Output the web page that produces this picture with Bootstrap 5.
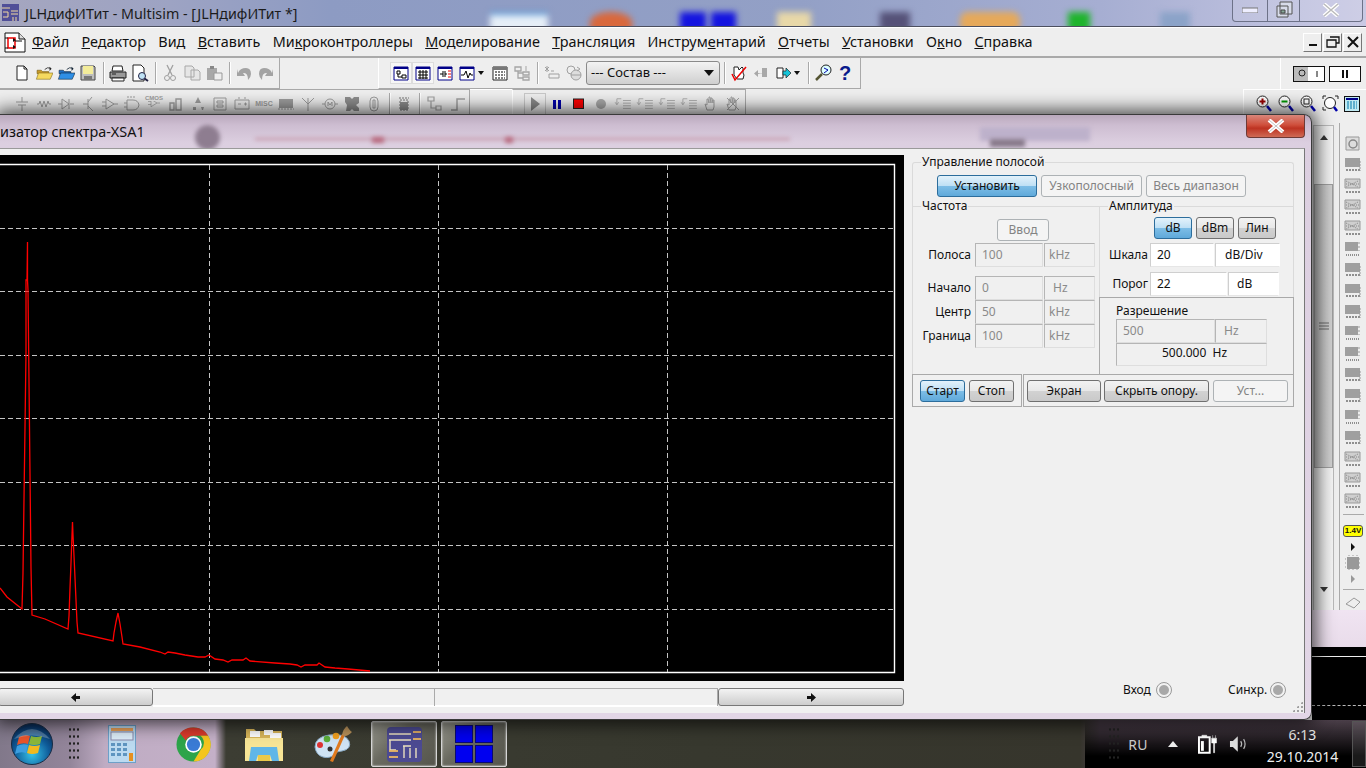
<!DOCTYPE html>
<html lang="ru">
<head>
<meta charset="utf-8">
<title>Multisim</title>
<link href="https://cdn.jsdelivr.net/npm/bootstrap@5.3.0/dist/css/bootstrap.min.css" rel="stylesheet">
<style>
html,body{margin:0;width:1366px;height:768px;overflow:hidden;background:#eee;font-family:"Noto Sans",sans-serif;color:#111}
.app{width:1366px;height:768px;position:relative;overflow:hidden}
.titlebar{height:27px;flex:none;background:linear-gradient(90deg,#a5a6bf 0,#9da3c3 170px,#8d9bc3 330px,#93a0c6 800px,#a6aed2 1100px,#c9c9e4 1366px);border-bottom:1px solid #4c4f5e;position:relative;overflow:hidden;font-size:14.3px;padding-left:25px;line-height:27px;color:#1b1b1b}
.blur{position:absolute;filter:blur(3px);top:12px;height:20px}
.capbtns{position:absolute;right:3px;top:-1px;width:131px;height:23px;border:1px solid #6d7288;border-top:0;border-radius:0 0 4px 4px;display:flex;background:rgba(255,255,255,.1)}
.capbtns>div{display:flex;align-items:center;justify-content:center;border-right:1px solid #6d7288}
.capbtns>div:last-child{border:0}
.menubar{height:31px;flex:none;background:#eee;border-bottom:2px solid #a9a9a9;border-top:1px solid #fff;font-size:14.4px;align-items:center;position:relative}
.menubar span.mi{margin-right:12.300px;line-height:1}
.mdibtn{width:19px;height:19px;background:#eee;border:1px solid;border-color:#fff #777 #777 #fff;display:flex;align-items:center;justify-content:center;margin-right:1px}
.tbrow{background:#eee;position:relative;flex:none}
.r1{height:31px}.r2{height:25px}
.r2 .band{padding-top:3px}
.band{height:100%;display:flex;align-items:center;flex:none}
.band.b{border-right:1px solid #a9a9a9;border-bottom:1px solid #a9a9a9}
.ti{width:22px;height:22px;flex:none;display:flex;align-items:center;justify-content:center}
.ti svg{display:block}
.sep{width:8px;height:22px;flex:none;position:relative}
.sep::after{content:"";position:absolute;left:4px;top:0;bottom:0;width:1px;background:#a9a9a9;box-shadow:1px 0 #fff}
.dd{width:8px;height:22px;flex:none;display:flex;align-items:center}
.dd::after{content:"";border:3px solid transparent;border-top:4px solid #111;border-bottom:0}
.combo{width:134px;height:24px;flex:none;border:1px solid #8a8a8a;border-radius:3px;background:linear-gradient(#f3f3f3,#cfcfcf);font-size:13px;padding-left:4px;display:flex;align-items:center;justify-content:space-between;padding-right:5px}
.combo::after{content:"";border:5px solid transparent;border-top:6px solid #111;border-bottom:0;border-left-width:5px;border-right-width:5px}
.work{height:606px;flex:none;display:flex;background:#eee;position:relative}
.sb{position:absolute;left:1313px;top:11px;width:21px;height:486px;background:linear-gradient(90deg,#e3e3e3,#f3f3f3);border:1px solid #b8b8b8;border-bottom:0;display:flex;flex-direction:column;align-items:center}
.thumb{width:100%;height:284px;background:linear-gradient(90deg,#b9b9b9,#cfcfcf);border:1px solid #9c9c9c;display:flex;align-items:center;justify-content:center}
.vt{position:absolute;left:1339px;top:9px;width:27px;height:487px;border-left:1px solid #a9a9a9;background:#eee;display:flex;flex-direction:column;align-items:center;gap:0;padding-top:10px}
.vt .v{height:21px;flex:none;display:flex;align-items:center}
.bgpink{position:absolute;left:1312px;top:496px;width:54px;height:37px;background:linear-gradient(#f0e4f2,#e9dcea)}
.bgblack{position:absolute;left:1312px;top:533px;width:54px;height:73px;background:#000}
.bgblack i{display:block;position:absolute;left:0;right:0;height:1px}
.taskbar{height:48px;flex:none;position:relative;display:flex;align-items:center;background:linear-gradient(90deg,#81788a 0,#93859a 70px,#bfacc3 105px,#c4b0c8 215px,#3c3d33 226px,#37382e 700px,#36352c 1080px,#4d404c 1100px,#4a3e48 1366px);overflow:hidden;color:#e8e8e8}
.taskbar::before{content:"";position:absolute;left:1085px;right:0;top:0;bottom:0;background:linear-gradient(rgba(0,0,0,0),#000 75%)}
.taskbar>*{position:relative}
.grip{width:11px;height:36px;flex:none;background-image:radial-gradient(circle,#222 1px,transparent 1.3px);background-size:4px 7px}
.tbtn{width:66px;height:46px;flex:none;border:1px solid #d6d6d6;border-radius:2px;background:linear-gradient(135deg,#9a9a90,#6a6a60 40%,#55554c);display:flex;align-items:center;justify-content:center;box-shadow:inset 0 0 2px #fff}
.dlg{position:absolute;left:0;top:114px;width:1312px;height:606px;border:1px solid #3a3a3a;border-left:0;border-radius:0 8px 8px 0;box-shadow:0 0 18px 4px rgba(0,0,0,.7);background:linear-gradient(#b9a8bc 0,#cdbdd1 10px,#dccfe0 28px,#e2d6e6);z-index:5;display:flex;flex-direction:column}
.dlgcap{height:33px;flex:none;font-size:14.4px;padding-top:7px;line-height:20px;position:relative;overflow:hidden;color:#111}
.dlgcap i{position:absolute;filter:blur(2px);display:block}
.closeb{position:absolute;right:6px;top:0;width:59px;height:23px;z-index:6;border:1px solid #6e3a36;border-top:0;border-radius:0 0 4px 4px;background:linear-gradient(#d9867a,#cf4f3c 45%,#bd3322 60%,#cf6a55);display:flex;align-items:center;justify-content:center}
.client{flex:1;margin-right:6px;margin-bottom:6px;background:#f0f0f0;border-top:1px solid #9a9a9a;border-right:1px solid #777;position:relative;display:flex;min-height:0}
.left{width:904px;flex:none;padding-top:6px;display:flex;flex-direction:column}
.scope{display:block;width:904px;height:526px;background:#000;flex:none}
.hsb{height:18px;margin-top:7px;display:flex}
.hb{height:18px;background:linear-gradient(#f3f3f3,#cdcdcd);border:1px solid #777;border-radius:3px;display:flex;align-items:center;justify-content:center}
.htrack{height:18px;border-top:1px solid #aaa;border-right:1px solid #aaa;box-shadow:0 1px #fff,inset 0 -1px #fff}
.panel{width:382px;margin-left:8px;padding-top:13px;flex:none;font-size:12px;line-height:16px;color:#111;position:relative}
.gr{border:1px solid #dadada;position:relative}
.gt{position:relative;top:-9px;left:8px;background:#f0f0f0;padding:0 1px;display:inline-block;height:16px;line-height:16px;white-space:nowrap;font-size:12px}
.btn.xb{--bs-btn-padding-y:0;--bs-btn-padding-x:0;--bs-btn-font-size:12px;--bs-btn-line-height:1;--bs-btn-border-radius:3px;height:22px;border:1px solid #707070;color:#111;background:linear-gradient(#f2f2f2 0,#e8e8e8 48%,#d2d2d2 52%,#c9c9c9);display:flex;align-items:center;justify-content:center;flex:none;opacity:1;white-space:nowrap}
.btn.xb.on{border-color:#2c6d9c;background:linear-gradient(#e3f2fb 0,#bfe0f5 48%,#7dbde6 52%,#5fa9da)}
.btn.xb.off{border-color:#adb2b5;background:#f4f4f4;color:#838383}
.form-control.ff{min-height:0;height:24px;padding:0 0 0 6px;border-radius:0;font-size:12px;line-height:21px;box-shadow:none;flex:none;white-space:nowrap}
.ff.dis{background:#f0f0f0;border:1px solid;border-color:#b5b5b5 #dedede #dedede #b5b5b5;color:#8a8a8a}
.ff.en{background:#fff;border:1px solid;border-color:#cfcfcf #fff #e6e6e6 #cfcfcf;color:#111}
.fr{display:flex;align-items:center}
.lb{text-align:right;flex:none;white-space:nowrap}
.g3{gap:3px}
.radio{width:16px;height:16px;border-radius:50%;border:1px solid #999;background:radial-gradient(circle,#a8a8a8 0,#a8a8a8 45%,#f2f2f2 55%);flex:none}
.grip2{position:absolute;right:1px;bottom:1px;width:11px;height:11px;background-image:radial-gradient(circle,#a0a0a0 1px,transparent 1.2px);background-size:4px 4px;clip-path:polygon(100% 0,100% 100%,0 100%)}
</style>
</head>
<body>
<svg width="0" height="0" class="position-absolute">
<defs>
<symbol id="g-res" viewBox="0 0 16 16"><path d="M1 8h2l1-3 2 6 2-6 2 6 2-6 1 3h2" fill="none" stroke="#9d9d9d"/></symbol>
<symbol id="g-src" viewBox="0 0 16 16"><path d="M8 1v5M2 6h12M4 9h8M8 9v6" fill="none" stroke="#9d9d9d"/></symbol>
<symbol id="g-dio" viewBox="0 0 16 16"><path d="M0 8h4M12 8h4M4 3v10l7-5zM11 3v10" fill="none" stroke="#9d9d9d"/></symbol>
<symbol id="g-tr" viewBox="0 0 16 16"><path d="M3 8h5M8 3v10M12 1 8 6M8 10l5 5" fill="none" stroke="#9d9d9d"/></symbol>
<symbol id="g-op" viewBox="0 0 16 16"><path d="M4 3v10l8-5zM0 6h4M0 10h4M12 8h4" fill="none" stroke="#9d9d9d"/></symbol>
<symbol id="g-ttl" viewBox="0 0 16 16"><path d="M3 4h6q5 0 6 5-1 5-6 5H3zM0 7h3M0 11h3" fill="none" stroke="#9d9d9d"/><path d="M3 1h8" stroke="#9d9d9d" stroke-dasharray="2 1"/></symbol>
<symbol id="g-mix" viewBox="0 0 16 16"><path d="M2 7h4v7H2zM8 3h5v11H8z" fill="none" stroke="#9d9d9d" stroke-width="1.4"/></symbol>
<symbol id="g-ind" viewBox="0 0 16 16"><path d="M8 1 5 7h6zM8 7v4M3 11h3v3H3zM11 11h3l-1 3h-1z" fill="#9d9d9d"/></symbol>
<symbol id="g-ram" viewBox="0 0 16 16"><path d="M2 2h12v12H2z" fill="none" stroke="#9d9d9d"/><path d="M5 5h6v2H5zM5 9h6v2H5z" fill="none" stroke="#9d9d9d"/></symbol>
<symbol id="g-pwr" viewBox="0 0 16 16"><path d="M1 4h14v9H1zM4 2h2M10 2h2M4 8h3M10 8h3M11.5 6.500v3" fill="none" stroke="#9d9d9d"/></symbol>
<symbol id="g-blk" viewBox="0 0 16 16"><path d="M1 3h14v9H1z" fill="#9d9d9d"/><path d="M0 13h16" stroke="#9d9d9d" stroke-dasharray="2 1"/></symbol>
<symbol id="g-ant" viewBox="0 0 16 16"><path d="M2 2l6 6 6-6M8 2v13" fill="none" stroke="#9d9d9d"/></symbol>
<symbol id="g-mot" viewBox="0 0 16 16"><circle cx="8" cy="8" r="5" fill="none" stroke="#9d9d9d"/><path d="M0 8h3M13 8h3M6 10V6l2 3 2-3v4" fill="none" stroke="#9d9d9d"/></symbol>
<symbol id="g-x" viewBox="0 0 16 16"><path d="M1 1h5l2 2 2-2h5v6l-3 2 3 3v3H10l-2-2-2 2H2l1-6-2-3z" fill="#8e8e8e"/></symbol>
<symbol id="g-tube" viewBox="0 0 16 16"><path d="M4 5q0-4 4-4t4 4v6q0 4-4 4t-4-4z" fill="none" stroke="#9d9d9d"/><path d="M7 4h2v8H7z" fill="none" stroke="#9d9d9d"/></symbol>
<symbol id="g-pl" viewBox="0 0 16 16"><path d="M3 2h10M4 4h8v10H4z" fill="none" stroke="#777" stroke-dasharray="2 1"/><path d="M4 6h8v8H4z" fill="#8c8c8c"/></symbol>
<symbol id="g-lst" viewBox="0 0 20 16"><path d="M10 4h9M10 7h9M10 10h9M10 13h9" stroke="#aaa" fill="none"/><path d="M8 2H3v6M1 6l2 3 2-3" stroke="#aaa" fill="none"/></symbol>
<symbol id="g-hand" viewBox="0 0 16 16"><path d="M4 14 2 8l2 1V3l1 0 1 4V1h1l1 6V2h1l1 5V4h1v7l-1 3z" fill="none" stroke="#a0a0a0"/></symbol>
<symbol id="v1" viewBox="0 0 18 16"><path d="M1 1h15v9H1z" fill="#9f9f9f"/><path d="M2 13h14" stroke="#8f8f8f" stroke-width="2" stroke-dasharray="2 1"/><path d="M16 4v10" stroke="#999" stroke-dasharray="2 1"/></symbol>
<symbol id="v2" viewBox="0 0 18 16"><path d="M1 1h13v9H1z" fill="#9f9f9f"/><path d="M15 1v9" stroke="#999" stroke-dasharray="2 2"/><path d="M2 14h14" stroke="#8f8f8f" stroke-width="2" stroke-dasharray="1 1"/></symbol>
<symbol id="v3" viewBox="0 0 18 16"><path d="M1 1h15v9H1z" fill="#cfcfcf" stroke="#999"/><path d="M2 3l12 6M14 3 2 9M2 6h13" stroke="#888" stroke-dasharray="1 1"/><path d="M2 14h14" stroke="#8f8f8f" stroke-width="2" stroke-dasharray="2 1"/></symbol>
<symbol id="cfolder" viewBox="0 0 26 26"><path d="M3 9h6l2 2h9v3H3z" fill="#c89a2a" stroke="#6c5511" stroke-width=".8"/><path d="M2 22 5 13h21l-4 9z" fill="#f5d95e" stroke="#7a6416" stroke-width=".8"/><path d="M14 8q4-4 8-2" fill="none" stroke="#222" stroke-width="1.2"/><path d="M24 7l-3-3v6z" fill="#222"/></symbol>
</defs>
</svg>
<div class="app d-flex flex-column">
  <div class="titlebar">
    <svg width="19" height="19" viewBox="0 0 19 19" class="position-absolute" style="left:1px;top:3px"><rect x="1" y="1" width="17" height="17" fill="#504f98"/><path d="M1 5h8M2 9h5v5H2M10 8h7M10 11h7M12 14v4M15 14v4" stroke="#f0d9a0" fill="none"/></svg>
    <span>JLНдифИТит - Multisim - [JLНдифИТит *]</span>
    <i class="blur" style="left:490px;width:58px;background:#e6eef7;border-top:3px solid #5b9bd8"></i>
    <i class="blur" style="left:590px;width:42px;background:#d9683c;border-radius:50% 50% 0 0"></i>
    <i class="blur" style="left:680px;width:26px;background:#1414e0"></i><i class="blur" style="left:711px;width:25px;background:#1414e0"></i>
    <i class="blur" style="left:777px;width:34px;background:#e8d8a8"></i>
    <i class="blur" style="left:880px;width:30px;background:#555178"></i>
    <i class="blur" style="left:960px;width:60px;background:#e6a95a;border-radius:8px"></i>
    <i class="blur" style="left:1068px;width:22px;background:#1eb42c"></i>
    <i class="blur" style="left:1160px;width:30px;background:#8ba3c8"></i>
    <div class="capbtns">
      <div style="width:35px"><svg width="16" height="6"><rect width="16" height="5" y="1" fill="#eef" stroke="#777"/></svg></div>
      <div style="width:32px"><svg width="18" height="18"><path d="M5 1h12v12H5z M2 5h11v11H2z" fill="#d8dcea" stroke="#555" /><path d="M6 9h4v3H6z" fill="#8a9" stroke="#444"/></svg></div>
      <div class="flex-fill"><svg width="18" height="14"><path d="M2 1 16 13M16 1 2 13" stroke="#fff" stroke-width="4"/><path d="M2 1 16 13M16 1 2 13" stroke="#777" stroke-width="1.500" opacity=".5"/></svg></div>
    </div>
  </div>
  <div class="menubar d-flex">
    <svg width="22" height="24" viewBox="0 0 22 24" class="ms-1 me-1 flex-none"><path d="M1 3h14l6 6v13H1z" fill="#fff" stroke="#111"/><path d="M15 3v6h6" fill="#ddd" stroke="#111"/><path d="M4 8h7v10H4z" fill="none" stroke="#e00" stroke-width="1.500"/><path d="M1 8h3M1 18h3M11 11h7" stroke="#111"/><path d="M9 8v4l3-2zM9 15v4l3-2z" fill="#111"/></svg>
    <div class="d-flex" style="margin-left:2px">
      <span class="mi"><u>Ф</u>айл</span><span class="mi"><u>Р</u>едактор</span><span class="mi">Вид</span><span class="mi"><u>В</u>ставить</span><span class="mi">Ми<u>к</u>роконтроллеры</span><span class="mi"><u>М</u>оделирование</span><span class="mi"><u>Т</u>рансляция</span><span class="mi">Инструм<u>е</u>нтарий</span><span class="mi"><u>О</u>тчеты</span><span class="mi"><u>У</u>становки</span><span class="mi">О<u>к</u>но</span><span class="mi"><u>С</u>правка</span>
    </div>
    <div class="ms-auto d-flex" style="margin-right:3px">
      <div class="mdibtn"><svg width="10" height="10"><path d="M1 8h8" stroke="#111" stroke-width="2"/></svg></div>
      <div class="mdibtn"><svg width="14" height="12"><path d="M4 1h9v6h-3M1 4h9v7H1z M1 4h9" fill="none" stroke="#111" stroke-width="1.300"/></svg></div>
      <div class="mdibtn"><svg width="12" height="12"><path d="M1 1l10 10M11 1 1 11" stroke="#111" stroke-width="2"/></svg></div>
    </div>
  </div>
  <div class="tbrow r1 d-flex">
    <div class="band b" style="width:280px;padding-left:11px">
      <div class="ti"><svg width="16" height="16"><path d="M3 1h7l3 3v11H3z" fill="#fff" stroke="#222"/><path d="M10 1v3h3" fill="none" stroke="#222"/></svg></div>
      <div class="ti"><svg width="18" height="18"><use href="#cfolder"/></svg></div>
      <div class="ti"><svg width="18" height="18" viewBox="0 0 26 26"><path d="M3 9h6l2 2h9v3H3z" fill="#1f6fc4" stroke="#123" stroke-width=".8"/><path d="M2 22 5 13h21l-4 9z" fill="#2f8fe6" stroke="#123" stroke-width=".8"/><path d="M14 8q4-4 8-2" fill="none" stroke="#123" stroke-width="1.200"/><path d="M24 7l-3-3v6z" fill="#123"/></svg></div>
      <div class="ti"><svg width="16" height="16"><path d="M1 1h13l1 1v13H1z" fill="#bdbdbd" stroke="#444"/><path d="M3 1h10v8H3z" fill="#f3ec9a"/><path d="M4 11h8v4H4z" fill="#777"/></svg></div>
      <div class="sep"></div>
      <div class="ti"><svg width="18" height="17"><path d="M4 1h9l1 5H3z" fill="#fff" stroke="#222"/><path d="M1 7h16v6H1z" fill="#999" stroke="#222"/><path d="M3 13h12v3H3z" fill="#fff" stroke="#222"/><path d="M3 9h4" stroke="#222"/></svg></div>
      <div class="ti"><svg width="18" height="18"><path d="M2 1h8l3 3v13H2z" fill="#fff" stroke="#222"/><circle cx="11" cy="12" r="3.500" fill="#bfe2f5" stroke="#224"/><path d="M13.500 14.500 17 17" stroke="#224" stroke-width="2"/></svg></div>
      <div class="sep"></div>
      <div class="ti"><svg width="16" height="18"><path d="M5 1l5 10M11 1 6 11" stroke="#a0a0a0" stroke-width="1.300"/><circle cx="5" cy="14" r="2.500" fill="none" stroke="#a0a0a0"/><circle cx="11" cy="14" r="2.500" fill="none" stroke="#a0a0a0"/></svg></div>
      <div class="ti"><svg width="17" height="16"><path d="M1 1h7l2 2v9H1zM7 5h7l2 2v8H7z" fill="#e6e6e6" stroke="#a8a8a8"/></svg></div>
      <div class="ti"><svg width="17" height="16"><path d="M1 3h10v12H1z" fill="#a8a8a8"/><path d="M4 1h4v3H4z" fill="#888"/><path d="M8 8h8v7H8z" fill="#eee" stroke="#999"/></svg></div>
      <div class="sep"></div>
      <div class="ti"><svg width="18" height="16"><path d="M3 8q2-5 8-5 5 0 5 6 0 3-3 6-0-8-5-7l2 3-8 0 0-7z" fill="#a3a3a3"/></svg></div>
      <div class="ti"><svg width="18" height="16"><path d="M15 8q-2-5-8-5-5 0-5 6 0 3 3 6 0-8 5-7l-2 3 8 0 0-7z" fill="#a3a3a3"/></svg></div>
    </div>
    <div class="band" style="width:98px"></div>
    <div class="band b" style="width:483px;padding-left:11px;border-left:1px solid #fff">
      <div class="ti" style="background:#f6f6f6;outline:1px solid #dcdcdc;outline-offset:-1px"><svg width="16" height="15"><path d="M1 1h14v13H1z" fill="#fff" stroke="#008"/><path d="M1 1h14v2H1z" fill="#008"/><path d="M4 5h3v3H4zM9 9h4v3H9zM5 8v3h4" fill="none" stroke="#000"/></svg></div>
      <div class="ti" style="background:#f6f6f6;outline:1px solid #dcdcdc;outline-offset:-1px"><svg width="16" height="15"><path d="M1 1h14v13H1z" fill="#fff" stroke="#008"/><path d="M1 1h14v2H1z" fill="#008"/><path d="M3 6h10M3 9h10M3 12h10M5 4v9M8 4v9M11 4v9" stroke="#000" fill="none"/></svg></div>
      <div class="ti"><svg width="16" height="15"><path d="M1 1h14v13H1z" fill="#fff" stroke="#008"/><path d="M1 1h14v2H1z" fill="#008"/><path d="M3 8h3M6 5v6M8 5v6M8 8h2" stroke="#000"/><path d="M11 5h3M11 8h3M11 11h3" stroke="#e00"/></svg></div>
      <div class="ti"><svg width="16" height="15"><path d="M1 1h14v13H1z" fill="#fff" stroke="#008"/><path d="M1 1h14v2H1z" fill="#008"/><path d="M2 9h3l2-4 2 7 2-5 1 2h2" fill="none" stroke="#000"/></svg></div>
      <div class="dd"></div>
      <div class="ti" style="margin-left:3px"><svg width="16" height="15"><path d="M1 1h14v13H1z" fill="#fff" stroke="#222"/><path d="M1 1h14v3H1z" fill="#777"/><path d="M3 6h10M3 9h10M3 12h10" stroke="#000" stroke-dasharray="2 1"/></svg></div>
      <div class="ti"><svg width="16" height="16"><path d="M1 2h6v4H1zM9 7h6v3H9zM9 12h6v3H9zM4 6v7h5M4 8h5" fill="none" stroke="#a5a5a5" stroke-width="1.300"/><path d="M12 1v5" stroke="#a5a5a5"/></svg></div>
      <div class="sep"></div>
      <div class="ti"><svg width="16" height="16"><path d="M1 2 5 6M5 2 1 6M3 1v6M5 9h10v4H5zM7 6h3" stroke="#a0a0a0" fill="none"/></svg></div>
      <div class="ti"><svg width="16" height="16"><circle cx="5" cy="5" r="4" fill="none" stroke="#a0a0a0"/><circle cx="10" cy="10" r="5" fill="#ddd" stroke="#a0a0a0"/><path d="M5 10h10M11 2l3 2-3 2" stroke="#a0a0a0" fill="none"/></svg></div>
      <div class="combo" style="margin-left:1px"><span>--- Состав ---</span></div>
      <div class="sep"></div>
      <div class="ti"><svg width="17" height="17"><path d="M3 2h4l1 3 3-3 1 1v5l1 2-1 4H6L3 10z" fill="#fff" stroke="#222"/><path d="M1 9l3 6L15 2" fill="none" stroke="#e00" stroke-width="1.500"/></svg></div>
      <div class="ti"><svg width="16" height="14"><path d="M9 2h5v9H9zM9 7H5V4L1 7.500 5 11V8" fill="#a8a8a8"/></svg></div>
      <div class="ti"><svg width="17" height="14"><path d="M2 2h6v10H2z" fill="#fff" stroke="#222"/><path d="M8 5h3V2l5 5-5 5V9H8z" fill="#16c4d8" stroke="#222" stroke-width=".7"/></svg></div>
      <div class="dd"></div>
      <div class="sep" style="margin-left:2px"></div>
      <div class="ti"><svg width="17" height="18"><circle cx="11" cy="6" r="5" fill="#dff" stroke="#222"/><path d="M7 10 1 16" stroke="#553" stroke-width="2.500"/><path d="M9 4l4 2-4 3" fill="none" stroke="#00a"/></svg></div>
      <div class="ti"><span class="fw-bold" style="font:bold 20px 'Liberation Sans',sans-serif;color:#0a1a8c;line-height:1">?</span></div>
    </div>
    <div class="band flex-fill"></div>
    <div class="band" style="width:86px;border-left:1px solid #fff;gap:4px;padding-left:12px">
      <svg width="32" height="16"><rect x=".5" y=".5" width="31" height="15" fill="#fff" stroke="#111"/><path d="M1 1h14v14H1z" fill="#bbb"/><circle cx="9" cy="7" r="3" fill="none" stroke="#222" /><path d="M24 5v6" stroke="#111"/></svg>
      <svg width="32" height="16"><rect x=".5" y=".5" width="31" height="15" fill="#fff" stroke="#111"/><path d="M14 4v8M18 4v8" stroke="#111" stroke-width="2"/></svg>
    </div>
  </div>
  <div class="tbrow r2 d-flex">
    <div class="band" style="width:470px;padding-left:11px;border-right:1px solid #a9a9a9;border-top:1px solid #a9a9a9">
      <div class="ti"><svg width="16" height="16"><use href="#g-src"/></svg></div>
      <div class="ti"><svg width="16" height="16"><use href="#g-res"/></svg></div>
      <div class="ti"><svg width="16" height="16"><use href="#g-dio"/></svg></div>
      <div class="ti"><svg width="16" height="16"><use href="#g-tr"/></svg></div>
      <div class="ti"><svg width="16" height="16"><use href="#g-op"/></svg></div>
      <div class="ti"><svg width="16" height="16"><use href="#g-ttl"/></svg></div>
      <div class="ti flex-column" style="line-height:1;position:relative"><span style="font:bold 6px 'Liberation Sans',sans-serif;color:#9d9d9d;letter-spacing:0">CMOS</span><svg width="16" height="12" viewBox="0 4 16 12"><use href="#g-op"/></svg></div>
      <div class="ti"><svg width="16" height="16"><use href="#g-mix"/></svg></div>
      <div class="ti"><svg width="16" height="16"><use href="#g-ind"/></svg></div>
      <div class="ti"><svg width="16" height="16"><use href="#g-ram"/></svg></div>
      <div class="ti"><svg width="16" height="16"><use href="#g-pwr"/></svg></div>
      <div class="ti"><span style="font:bold 7px 'Liberation Sans',sans-serif;color:#9d9d9d">MISC</span></div>
      <div class="ti"><svg width="16" height="16"><use href="#g-blk"/></svg></div>
      <div class="ti"><svg width="16" height="16"><use href="#g-ant"/></svg></div>
      <div class="ti"><svg width="16" height="16"><use href="#g-mot"/></svg></div>
      <div class="ti"><svg width="16" height="16"><use href="#g-x"/></svg></div>
      <div class="ti"><svg width="16" height="16"><use href="#g-tube"/></svg></div>
      <div class="sep"></div>
      <div class="ti"><svg width="16" height="16"><use href="#g-pl"/></svg></div>
      <div class="sep"></div>
      <div class="ti"><svg width="16" height="16"><path d="M2 1h6v4H2zM10 10h5v4h-5zM5 5v7h5" fill="none" stroke="#a0a0a0" stroke-width="1.200"/></svg></div>
      <div class="ti" style="margin-left:2px"><svg width="16" height="16"><path d="M1 14h6V3h8" fill="none" stroke="#a0a0a0" stroke-width="1.500"/></svg></div>
    </div>
    <div class="band" style="width:42px;border-top:1px solid #fff"></div>
    <div class="band" style="width:234px;padding-left:11px;border-right:1px solid #a9a9a9;border-top:1px solid #a9a9a9;border-left:1px solid #fff">
      <div class="ti" style="border:1px solid #c8c8c8;border-bottom:0"><svg width="12" height="16"><path d="M2 1l9 7-9 7z" fill="#8a8a8a"/></svg></div>
      <div class="ti"><svg width="12" height="12"><path d="M2 2h3v9H2z" fill="#00a"/><path d="M7 2h3v9H7z" fill="#00a"/></svg></div>
      <div class="ti"><svg width="12" height="12"><rect x=".5" y="1" width="10" height="9.500" fill="#f00" stroke="#222"/></svg></div>
      <div class="ti"><svg width="12" height="12"><circle cx="6" cy="6" r="5" fill="#a8a8a8"/></svg></div>
      <div class="ti"><svg width="18" height="14"><use href="#g-lst"/></svg></div>
      <div class="ti"><svg width="18" height="14"><use href="#g-lst"/></svg></div>
      <div class="ti"><svg width="18" height="14"><use href="#g-lst"/></svg></div>
      <div class="ti"><svg width="18" height="14"><use href="#g-lst"/></svg></div>
      <div class="ti"><svg width="16" height="16"><use href="#g-hand"/></svg></div>
      <div class="ti"><svg width="16" height="16"><use href="#g-hand"/><path d="M2 2l12 12M14 2 2 14" stroke="#a0a0a0"/></svg></div>
    </div>
    <div class="band flex-fill"></div>
    <div class="band" style="width:123px;padding-left:9px;border-left:1px solid #fff;border-top:1px solid #fff">
      <div class="ti"><svg width="16" height="17"><circle cx="6.500" cy="6.500" r="5.500" fill="#fff" stroke="#222"/><path d="M3.500 6.500h6M6.500 3.500v6" stroke="#900" stroke-width="2"/><path d="M11 11l4 5" stroke="#00a" stroke-width="2.500"/></svg></div>
      <div class="ti"><svg width="16" height="17"><circle cx="6.500" cy="6.500" r="5.500" fill="#fff" stroke="#222"/><path d="M3.500 6.500h6" stroke="#090" stroke-width="2"/><path d="M11 11l4 5" stroke="#00a" stroke-width="2.500"/></svg></div>
      <div class="ti"><svg width="16" height="17"><circle cx="6.500" cy="6.500" r="5.500" fill="#fff" stroke="#222"/><rect x="4" y="4" width="5" height="5" fill="none" stroke="#222"/><path d="M11 11l4 5" stroke="#00a" stroke-width="2.500"/></svg></div>
      <div class="ti"><svg width="17" height="17"><circle cx="8" cy="8" r="5.500" fill="#fff" stroke="#222"/><path d="M1 4V1h3M13 1h3v3M1 12v3h3" fill="none" stroke="#222"/><path d="M12 12l3 4" stroke="#00a" stroke-width="2.500"/></svg></div>
      <div class="ti"><svg width="16" height="16"><rect x=".5" y=".5" width="15" height="15" fill="#bfe9f2" stroke="#111"/><path d="M2 2h12v2H2z" fill="#008"/><path d="M3 6h10M3 8h10M3 10h10M3 12h10" stroke="#07a" stroke-dasharray="2 1"/></svg></div>
    </div>
  </div>
  <div class="work">
    <div class="sb">
      <svg width="10" height="7" class="mt-2 flex-none"><path d="M5 1l4 5H1z" fill="#333"/></svg>
      <div class="thumb flex-none" style="margin-top:43px"><svg width="10" height="9"><path d="M0 1h10M0 4h10M0 7h10" stroke="#666"/></svg></div>
      <svg width="10" height="7" class="flex-none" style="margin-top:118px"><path d="M5 6l4-5H1z" fill="#333"/></svg>
    </div>
    <div class="vt">
      <div class="v"><svg width="16" height="16"><path d="M1 1h13v13H1z" fill="#ddd" stroke="#999"/><circle cx="8" cy="8" r="4" fill="none" stroke="#888" stroke-width="1.500"/></svg></div>
      <div class="v"><svg width="18" height="16"><use href="#v1"/></svg></div>
      <div class="v"><svg width="18" height="16"><use href="#v3"/></svg></div>
      <div class="v"><svg width="18" height="16"><use href="#v3"/></svg></div>
      <div class="v"><svg width="18" height="16"><use href="#v3"/></svg></div>
      <div class="v"><svg width="18" height="16"><use href="#v2"/></svg></div>
      <div class="v"><svg width="18" height="16"><use href="#v1"/></svg></div>
      <div class="v"><svg width="18" height="16"><use href="#v1"/></svg></div>
      <div class="v"><svg width="18" height="16"><use href="#v1"/></svg></div>
      <div class="v"><svg width="18" height="16"><use href="#v2"/></svg></div>
      <div class="v"><svg width="18" height="16"><use href="#v2"/></svg></div>
      <div class="v"><svg width="18" height="16"><use href="#v1"/></svg></div>
      <div class="v"><svg width="18" height="16"><use href="#v1"/></svg></div>
      <div class="v"><svg width="18" height="16"><use href="#v2"/></svg></div>
      <div class="v"><svg width="18" height="16"><use href="#v1"/></svg></div>
      <div class="v"><svg width="18" height="16"><use href="#v3"/></svg></div>
      <div class="v"><svg width="18" height="16"><use href="#v3"/></svg></div>
      <div class="v"><svg width="18" height="16"><use href="#v3"/></svg></div>
      <div style="width:21px;height:1px;background:#aaa;margin:3px 0 5px;flex:none"></div>
      <div class="d-flex align-items-center justify-content-center" style="width:20px;height:12px;background:#ff0;border:1px solid #555;border-radius:3px;font:bold 8px/10px 'Liberation Sans',sans-serif;color:#111;margin-top:5px;flex:none">1.4V</div>
      <svg width="6" height="8" class="flex-none" style="margin-top:6px"><path d="M1 0l4 4-4 4z" fill="#111"/></svg>
      <svg width="16" height="16" class="flex-none" style="margin-top:4px"><path d="M2 2h12v12H2z" fill="#999"/><path d="M0 4h16M0 8h16M0 12h16M4 0v16M8 0v16M12 0v16" stroke="#999" stroke-dasharray="1 1"/></svg>
      <svg width="6" height="8" class="flex-none" style="margin-top:4px"><path d="M1 0l4 4-4 4z" fill="#999"/></svg>
      <div style="width:21px;height:1px;background:#aaa;margin-top:6px;flex:none"></div>
      <svg width="16" height="14" class="flex-none" style="margin-top:5px"><path d="M1 9l8-6 6 4-6 6z" fill="none" stroke="#999"/></svg>
    </div>
    <div class="bgpink"></div>
    <div class="bgblack"><i style="top:9px;background:#eee"></i><i style="top:58px;border-top:1px dashed #bbb"></i></div>
  </div>
  <div class="taskbar">
    <div class="flex-none d-flex align-items-center justify-content-center" style="width:66px">
      <svg width="44" height="44" viewBox="0 0 44 44"><defs><radialGradient id="orb" cx=".5" cy=".75" r=".7"><stop offset="0" stop-color="#35c3e8"/><stop offset=".6" stop-color="#0f5c9a"/><stop offset="1" stop-color="#0a2f5c"/></radialGradient></defs><circle cx="22" cy="22" r="20.500" fill="url(#orb)" stroke="#1a2c44"/><path d="M9 15q6-3 11-1l-2 8q-5-2-11 1z" fill="#e8552c"/><path d="M21 14q5 2 11 0l-2 8q-6 2-11 0z" fill="#8bb73a"/><path d="M7 24q6-3 11-1l-2 8q-5-2-11 1z" fill="#3d9ee0"/><path d="M19 23q5 2 11 0l-2 8q-6 2-11 0z" fill="#f2b91f"/><path d="M4 17q18-20 36 0-18-7-36 0z" fill="#fff" opacity=".25"/></svg>
    </div>
    <div class="grip" style="margin-left:4px"></div>
    <div class="flex-none" style="margin-left:29px;width:28px"><svg width="28" height="38" viewBox="0 0 28 38"><rect x=".5" y=".5" width="27" height="37" fill="#bcdaf0" stroke="#6da0c8"/><rect x="3" y="3" width="22" height="3" fill="#e8a058"/><rect x="3" y="7" width="22" height="8" fill="#dcecf8" stroke="#88a"/><g fill="#5f95c0"><rect x="3" y="18" width="4" height="3"/><rect x="9" y="18" width="4" height="3"/><rect x="15" y="18" width="4" height="3"/><rect x="3" y="23" width="4" height="3"/><rect x="9" y="23" width="4" height="3"/><rect x="15" y="23" width="4" height="3"/><rect x="3" y="28" width="4" height="3"/><rect x="9" y="28" width="4" height="3"/><rect x="15" y="28" width="4" height="3"/></g><rect x="21" y="28" width="4" height="8" fill="#e69020"/></svg></div>
    <div class="flex-none" style="margin-left:40px"><svg width="35" height="35" viewBox="0 0 36 36"><circle cx="18" cy="18" r="17.500" fill="#2da44a"/><path d="M18 .5A17.500 17.500 0 0 1 33.200 9H18a9 9 0 0 0-8 5L4 6.500A17.500 17.500 0 0 1 18 .5z" fill="#dc3a2c"/><path d="M33.200 9A17.500 17.500 0 0 1 18 35.500L25.700 23A9 9 0 0 0 25 9z" fill="#f4c51e"/><circle cx="18" cy="18" r="8.500" fill="#fff"/><circle cx="18" cy="18" r="6.800" fill="#3a7bd5"/></svg></div>
    <div class="flex-none" style="margin-left:33px"><svg width="40" height="38" viewBox="0 0 40 38"><path d="M2 4h8l2 2h26v28H2z" fill="#d9b75a"/><path d="M6 6h10v6H6z" fill="#fff"/><path d="M20 5h9v5h-9zM26 8h11v5H26z" fill="#fff"/><path d="M1 13h38v23H1z" fill="#f7e596"/><path d="M5 36 7 22h26l2 14h-7l-2-6H14l-2 6z" fill="#5fb6e8"/><path d="M14 30h12v6H14z" fill="#e9c94a"/></svg></div>
    <div class="flex-none" style="margin-left:30px"><svg width="40" height="38" viewBox="0 0 40 38"><path d="M1 22q0-10 14-12 16-2 20 6 3 8-7 10-5 0-7 3-5 5-12 3T1 22z" fill="#cfe3f4" stroke="#89a9c4"/><circle cx="6" cy="20" r="3" fill="#d33"/><circle cx="13" cy="14" r="3.300" fill="#5aad3a"/><circle cx="22" cy="11" r="3.300" fill="#f0a020"/><circle cx="16" cy="24" r="2.500" fill="#333"/><path d="M16 36 28 9l3 1-12 27z" fill="#e07a1e"/><path d="M28 10q1-6 5-9 3 5 5 6-4 4-7 4z" fill="#b8915a"/></svg></div>
    <div class="tbtn" style="margin-left:17px"><svg width="37" height="37" viewBox="0 0 37 37"><rect x="1" y="1" width="35" height="35" rx="4" fill="#4c4a92"/><path d="M3 8h22M3 14h11M4 14v10h6M14 14h11M3 31h9M3 25h9M18 20v12M24 22v10M30 22v10M17 20h8M27 6h8M27 13h8" fill="none" stroke="#eadfc0" stroke-width="1.400"/><path d="M27 6h8M27 13h8M3 25h9M3 31h9" stroke="#e4a74c" stroke-width="1.600"/></svg></div>
    <div class="tbtn" style="margin-left:4px"><svg width="40" height="40" viewBox="0 0 40 40"><g fill="#0000f0" stroke="#0a0a70"><rect x="1.500" y="1.500" width="17" height="17"/><rect x="21.500" y="1.500" width="17" height="17"/><rect x="1.500" y="21.500" width="17" height="17"/><rect x="21.500" y="21.500" width="17" height="17"/></g></svg></div>
    <div class="grip" style="margin-left:601px"></div>
    <span style="font-size:14px;margin-left:9px;color:#ccc;letter-spacing:.3px">RU</span>
    <svg width="10" height="6" style="margin-left:20px"><path d="M5 0l5 6H0z" fill="#eee"/></svg>
    <svg width="20" height="20" viewBox="0 0 20 20" style="margin-left:20px"><path d="M1 3h11v16H1z" fill="none" stroke="#fff" stroke-width="2"/><path d="M3 7h3v10H3z" fill="#fff"/><path d="M4 1h5v2H4zM14 4h5v5h-5zM16 9h1v10h-1zM15 1v3M18 1v3" fill="#fff" stroke="#fff" stroke-width=".5"/></svg>
    <svg width="20" height="18" viewBox="0 0 20 18" style="margin-left:12px"><path d="M1 6h3l5-5v16l-5-5H1z" fill="#ddd"/><path d="M12 6q2 3 0 6M15 4q3 5 0 10" fill="none" stroke="#bbb" stroke-width="1.200"/></svg>
    <div class="text-center flex-none" style="width:92px;margin-left:9px;padding-top:3px;font-size:14px;line-height:22px;color:#eee"><div>6:13</div><div>29.10.2014</div></div>
    <div class="flex-none" style="width:14px;height:46px;margin-left:5px;border:1px solid #555;background:rgba(255,255,255,.1)"></div>
  </div>

  <div class="dlg">
    <div class="dlgcap">изатор спектра-XSA1
      <i style="left:195px;top:10px;width:25px;height:25px;background:#8e7d90;border-radius:50%"></i>
      <i style="left:255px;top:23px;width:535px;height:2px;background:#c28fa0"></i>
      <i style="left:372px;top:22px;width:12px;height:6px;background:#b86b80"></i>
      <i style="left:505px;top:22px;width:8px;height:6px;background:#b86b80"></i>
      <i style="left:980px;top:12px;width:110px;height:14px;background:#bdb1cb"></i>
      <i style="left:990px;top:24px;width:35px;height:8px;background:#87798a"></i>
    </div>
    <button class="closeb p-0" type="button" aria-label="Закрыть"><svg width="20" height="14"><path d="M3 1l14 12M17 1 3 13" stroke="#fff" stroke-width="4"/><path d="M3 1l14 12M17 1 3 13" stroke="#777" stroke-width="1" opacity=".45"/></svg></button>
    <div class="client">
      <div class="left">
        <svg class="scope" viewBox="0 0 904 526" xmlns="http://www.w3.org/2000/svg">
          <path d="M-1 9.500H894.500V517.500H-1" fill="none" stroke="#fff" stroke-width="1.400"/>
          <g stroke="#c4c4c4" stroke-dasharray="5 3" fill="none">
            <path d="M0 73.500H894M0 136.500H894M0 200.500H894M0 263.500H894M0 327.500H894M0 390.500H894M0 454.500H894"/>
            <path d="M209.500 10V517M438.500 10V517M667.500 10V517"/>
          </g>
          <path transform="translate(0 -155)" d="M0 588 7 597 22 609 23 573 24 499 25 427 26 353 26 280 27 280 27.500 242 27.500 280 28 290 29 382 30 475 31 568 32 615 45 619 68 629 69 616 70 588 71 563 72 535 72.500 522 73 535 74 556 75 578 76 600 77 622 78 633 113 641 114 633 116 622 118 613 120 624 122 637 123 644 140 647 160 652 165 654 168 652 175 653 185 655 198 657 205 657 209 655 215 659 223 660 228 662 232 660 243 660 246 658 250 661 275 663 290 664 297 665 301 667 305 665 317 665 319 663 325 667 335 668 348 669 370 671" fill="none" stroke="#f00" stroke-width="1.300"/>
        </svg>
        <div class="hsb">
          <div class="hb" style="width:155px;margin-left:-2px"><svg width="9" height="9"><path d="M0 4.500 5 0v3h4v3H5v3z" fill="#111"/></svg></div>
          <div class="htrack" style="width:282px"></div>
          <div class="htrack" style="width:283px"></div>
          <div class="hb" style="width:186px"><svg width="9" height="9"><path d="M9 4.500 4 0v3H0v3h4v3z" fill="#111"/></svg></div>
        </div>
      </div>
      <div class="panel">
        <div class="gr" style="height:44px;border-bottom:0;border-radius:3px 3px 0 0">
          <span class="gt">Управление полосой</span>
          <div class="d-flex gap-1" style="margin:-4px 0 0 24px">
            <button class="btn xb on" style="width:100px" type="button">Установить</button>
            <button class="btn xb off" style="width:101px" type="button">Узкополосный</button>
            <button class="btn xb off" style="width:100px" type="button">Весь диапазон</button>
          </div>
        </div>
        <div class="d-flex">
          <div class="gr" style="width:187px;height:168px;border-bottom:0;border-right:0">
            <span class="gt">Частота</span>
            <div class="d-flex" style="margin:-4px 0 0 84px"><button class="btn xb off" style="width:52px" type="button">Ввод</button></div>
            <div class="fr" style="margin-top:2px"><span class="lb" style="width:58px">Полоса</span><div class="form-control ff dis" style="width:68px;margin-left:4px">100</div><div class="form-control ff dis" style="width:51px;margin-left:1px;padding-left:4px">kHz</div></div>
            <div class="fr" style="margin-top:9px"><span class="lb" style="width:58px">Начало</span><div class="form-control ff dis" style="width:68px;margin-left:4px">0</div><div class="form-control ff dis" style="width:51px;margin-left:1px;padding-left:8px">Hz</div></div>
            <div class="fr"><span class="lb" style="width:58px">Центр</span><div class="form-control ff dis" style="width:68px;margin-left:4px">50</div><div class="form-control ff dis" style="width:51px;margin-left:1px;padding-left:4px">kHz</div></div>
            <div class="fr"><span class="lb" style="width:58px">Граница</span><div class="form-control ff dis" style="width:68px;margin-left:4px">100</div><div class="form-control ff dis" style="width:51px;margin-left:1px;padding-left:4px">kHz</div></div>
          </div>
          <div style="width:195px">
            <div class="gr" style="height:91px;border-bottom:0;border-right:1px solid #dadada">
              <span class="gt">Амплитуда</span>
              <div class="d-flex gap-1" style="margin:-6px 0 0 54px">
                <button class="btn xb on" style="width:38px" type="button">dB</button>
                <button class="btn xb" style="width:38px" type="button">dBm</button>
                <button class="btn xb" style="width:38px" type="button">Лин</button>
              </div>
              <div class="fr" style="margin-top:4px"><span class="lb" style="width:48px">Шкала</span><div class="form-control ff en" style="width:64px;margin-left:2px">20</div><div class="form-control ff en" style="width:65px;margin-left:1px;padding-left:9px">dB/Div</div></div>
              <div class="fr" style="margin-top:5px"><span class="lb" style="width:48px">Порог</span><div class="form-control ff en" style="width:77px;margin-left:2px">22</div><div class="form-control ff en" style="width:51px;margin-left:1px;padding-left:8px">dB</div></div>
            </div>
            <div class="gr" style="height:77px;border:1px solid #a9a9a9;border-bottom:0;padding:5px 0 0 16px">
              <div>Разрешение</div>
              <div class="fr"><div class="form-control ff dis" style="width:99px">500</div><div class="form-control ff dis" style="width:52px;padding-left:8px">Hz</div></div>
              <div class="form-control ff dis text-center" style="width:151px;color:#111;height:23px;line-height:17px">500.000&nbsp; Hz</div>
            </div>
          </div>
        </div>
        <div class="d-flex" style="height:33px">
          <div class="d-flex gap-1 align-items-center border" style="width:110px;padding-left:7px;border-color:#a9a9a9!important">
            <button class="btn xb on" style="width:45px" type="button">Старт</button>
            <button class="btn xb" style="width:45px" type="button">Стоп</button>
          </div>
          <div class="d-flex g3 align-items-center border flex-fill" style="margin-left:1px;padding-left:3px;border-color:#a9a9a9!important">
            <button class="btn xb" style="width:74px" type="button">Экран</button>
            <button class="btn xb" style="width:105px" type="button">Скрыть опору.</button>
            <button class="btn xb off" style="width:75px;margin-left:1px" type="button">Уст...</button>
          </div>
        </div>
        <div class="d-flex align-items-center position-absolute" style="left:211px;top:533px;gap:5px;white-space:nowrap"><span>Вход</span><span class="radio"></span></div>
        <div class="d-flex align-items-center position-absolute" style="left:316px;top:533px;gap:3px;white-space:nowrap"><span>Синхр.</span><span class="radio"></span></div>
      </div>
      <div class="grip2"></div>
    </div>
  </div>
</div>
<script src="https://cdn.jsdelivr.net/npm/bootstrap@5.3.0/dist/js/bootstrap.bundle.min.js"></script>
</body>
</html>
